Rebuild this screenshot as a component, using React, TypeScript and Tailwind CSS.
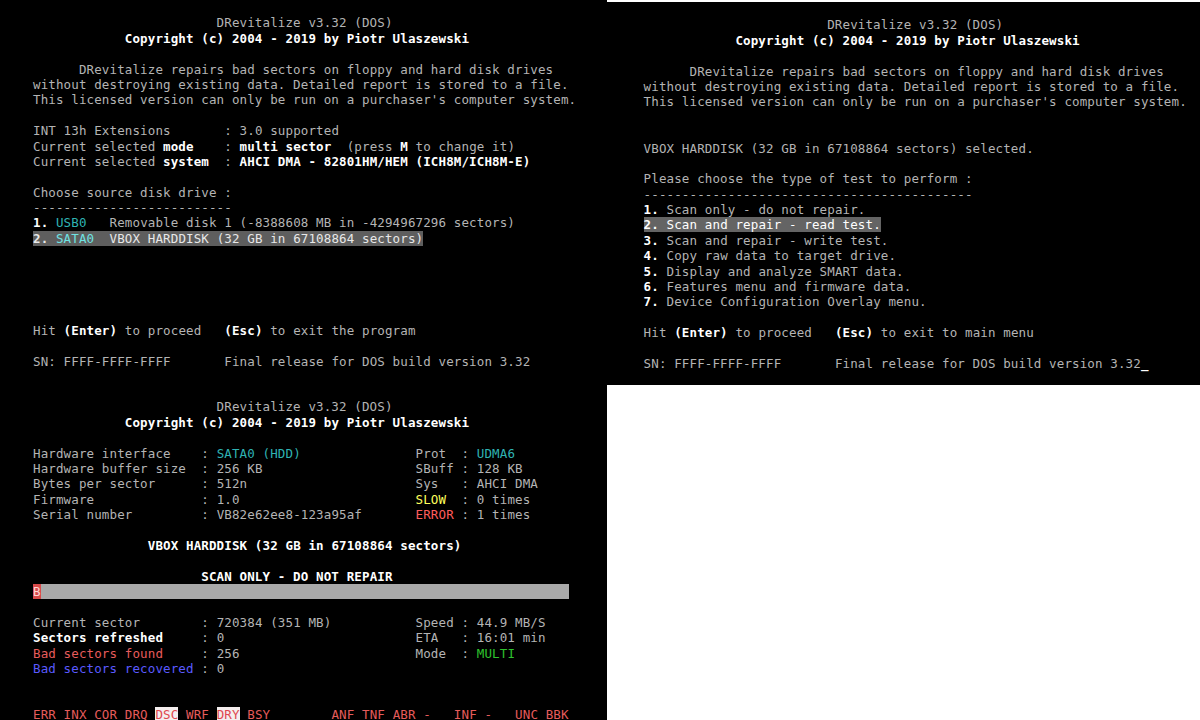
import React from 'react';

type Seg = { c: number; t: string; k?: string };
type Rows = Record<number, Seg[]>;

const G = 'text-[#b4b4b4]';
const W = 'text-white font-bold';
const CY = 'text-[#2fb3b3]';
const HL = 'bg-[#5e5e5e] text-[#e8e8e8]';
const RD = 'text-[#e65c5c]';
const FLAG = 'bg-[#f4eeee] text-[#e0484f]';

const at = (c: number, t: string, k?: string): Seg => ({ c, t, k });

const header: Rows = {
    1: [at(28, 'DRevitalize v3.32 (DOS)')],
    2: [at(16, 'Copyright (c) 2004 - 2019 by Piotr Ulaszewski', W)],
};

const intro: Rows = {
    ...header,
    4: [at(10, 'DRevitalize repairs bad sectors on floppy and hard disk drives')],
    5: [at(4, 'without destroying existing data. Detailed report is stored to a file.')],
    6: [at(4, "This licensed version can only be run on a purchaser's computer system.")],
};

const menuRows: Rows = {
    ...intro,
    8: [at(4, 'INT 13h Extensions'), at(29, ': 3.0 supported')],
    9: [
        at(4, 'Current selected '),
        at(21, 'mode', W),
        at(29, ': '),
        at(31, 'multi sector', W),
        at(45, '(press '),
        at(52, 'M', W),
        at(53, ' to change it)'),
    ],
    10: [
        at(4, 'Current selected '),
        at(21, 'system', W),
        at(29, ': '),
        at(31, 'AHCI DMA - 82801HM/HEM (ICH8M/ICH8M-E)', W),
    ],
    12: [at(4, 'Choose source disk drive :')],
    13: [at(4, '-'.repeat(26))],
    14: [at(4, '1.', W), at(7, 'USB0', CY), at(14, 'Removable disk 1 (-8388608 MB in -4294967296 sectors)')],
    15: [
        at(4, '2. ', HL + ' font-bold'),
        at(7, 'SATA0', 'bg-[#5e5e5e] text-[#6fe3e3]'),
        at(12, '  VBOX HARDDISK (32 GB in 67108864 sectors)', HL),
    ],
    21: [at(4, 'Hit '), at(8, '(Enter)', W), at(15, ' to proceed'), at(29, '(Esc)', W), at(34, ' to exit the program')],
    23: [at(4, 'SN: FFFF-FFFF-FFFF'), at(29, 'Final release for DOS build version 3.32')],
};

const tests = [
    'Scan only - do not repair.',
    'Scan and repair - read test.',
    'Scan and repair - write test.',
    'Copy raw data to target drive.',
    'Display and analyze SMART data.',
    'Features menu and firmware data.',
    'Device Configuration Overlay menu.',
];

const testRows: Rows = {
    ...intro,
    9: [at(4, 'VBOX HARDDISK (32 GB in 67108864 sectors) selected.')],
    11: [at(4, 'Please choose the type of test to perform :')],
    12: [at(4, '-'.repeat(43))],
    21: [at(4, 'Hit '), at(8, '(Enter)', W), at(15, ' to proceed'), at(29, '(Esc)', W), at(34, ' to exit to main menu')],
    23: [at(4, 'SN: FFFF-FFFF-FFFF'), at(29, 'Final release for DOS build version 3.32'), at(69, '_', W)],
};
tests.forEach((t, i) => {
    testRows[13 + i] =
        i === 1
            ? [at(4, `${i + 1}.`, 'bg-[#646464] text-white font-bold'), at(6, ` ${t}`, 'bg-[#646464] text-white')]
            : [at(4, `${i + 1}.`, W), at(6, ` ${t}`)];
});

const scanRows: Rows = {
    ...header,
    4: [at(4, 'Hardware interface'), at(26, ': '), at(28, 'SATA0 (HDD)', CY), at(54, 'Prot'), at(60, ': '), at(62, 'UDMA6', CY)],
    5: [at(4, 'Hardware buffer size'), at(26, ': 256 KB'), at(54, 'SBuff'), at(60, ': 128 KB')],
    6: [at(4, 'Bytes per sector'), at(26, ': 512n'), at(54, 'Sys'), at(60, ': AHCI DMA')],
    7: [at(4, 'Firmware'), at(26, ': 1.0'), at(54, 'SLOW', 'text-[#ffff5c]'), at(60, ': 0 times')],
    8: [at(4, 'Serial number'), at(26, ': VB82e62ee8-123a95af'), at(54, 'ERROR', 'text-[#ff5c5c]'), at(60, ': 1 times')],
    10: [at(19, 'VBOX HARDDISK (32 GB in 67108864 sectors)', W)],
    12: [at(26, 'SCAN ONLY - DO NOT REPAIR', W)],
    13: [at(4, 'B', 'bg-[#d84a4a] text-[#ffd6d6]'), at(5, ' '.repeat(69), 'bg-[#a9a9a9]')],
    15: [at(4, 'Current sector'), at(26, ': 720384 (351 MB)'), at(54, 'Speed'), at(60, ': 44.9 MB/S')],
    16: [at(4, 'Sectors refreshed', W), at(26, ': 0'), at(54, 'ETA'), at(60, ': 16:01 min')],
    17: [at(4, 'Bad sectors found', RD), at(26, ': 256'), at(54, 'Mode'), at(60, ': '), at(62, 'MULTI', 'text-[#2ec22e]')],
    18: [at(4, 'Bad sectors recovered', 'text-[#5a5aff]'), at(26, ': 0')],
    21: [
        at(4, 'ERR INX COR DRQ ', RD),
        at(20, 'DSC', FLAG),
        at(23, ' WRF ', RD),
        at(28, 'DRY', FLAG),
        at(31, ' BSY', RD),
        at(43, 'ANF TNF ABR', RD),
        at(55, '-', RD),
        at(59, 'INF', RD),
        at(63, '-', RD),
        at(67, 'UNC BBK', RD),
    ],
};

const Line: React.FC<{ segs?: Seg[] }> = ({ segs = [] }) => {
    let cur = 0;
    return (
        <div className="h-[15.4px]">
            {segs.map((s, i) => {
                const gap = ' '.repeat(Math.max(0, s.c - cur));
                cur = s.c + s.t.length;
                return (
                    <React.Fragment key={i}>
                        {gap}
                        <span className={s.k ?? G}>{s.t}</span>
                    </React.Fragment>
                );
            })}
        </div>
    );
};

const Screen: React.FC<{ rows: Rows; count: number; className?: string }> = ({ rows, count, className }) => (
    <div
        className={`overflow-hidden bg-black font-['DejaVu_Sans_Mono',monospace] text-[12.5px] leading-[15.4px] tracking-[0.125px] whitespace-pre ${G} ${className ?? ''}`}
    >
        {Array.from({ length: count }, (_, i) => (
            <Line key={i} segs={rows[i]} />
        ))}
    </div>
);

export default function App() {
    return (
        <div className="flex h-[720px] w-[1200px] overflow-hidden bg-white">
            <div className="flex w-[607px] flex-col bg-black">
                <Screen rows={menuRows} count={25} className="h-[384px] pl-[2.4px]" />
                <Screen rows={scanRows} count={23} className="flex-1 pl-[2.4px]" />
            </div>
            <div className="flex-1 pt-[2px]">
                <Screen rows={testRows} count={25} className="h-[383px] pl-[6px]" />
            </div>
        </div>
    );
}
